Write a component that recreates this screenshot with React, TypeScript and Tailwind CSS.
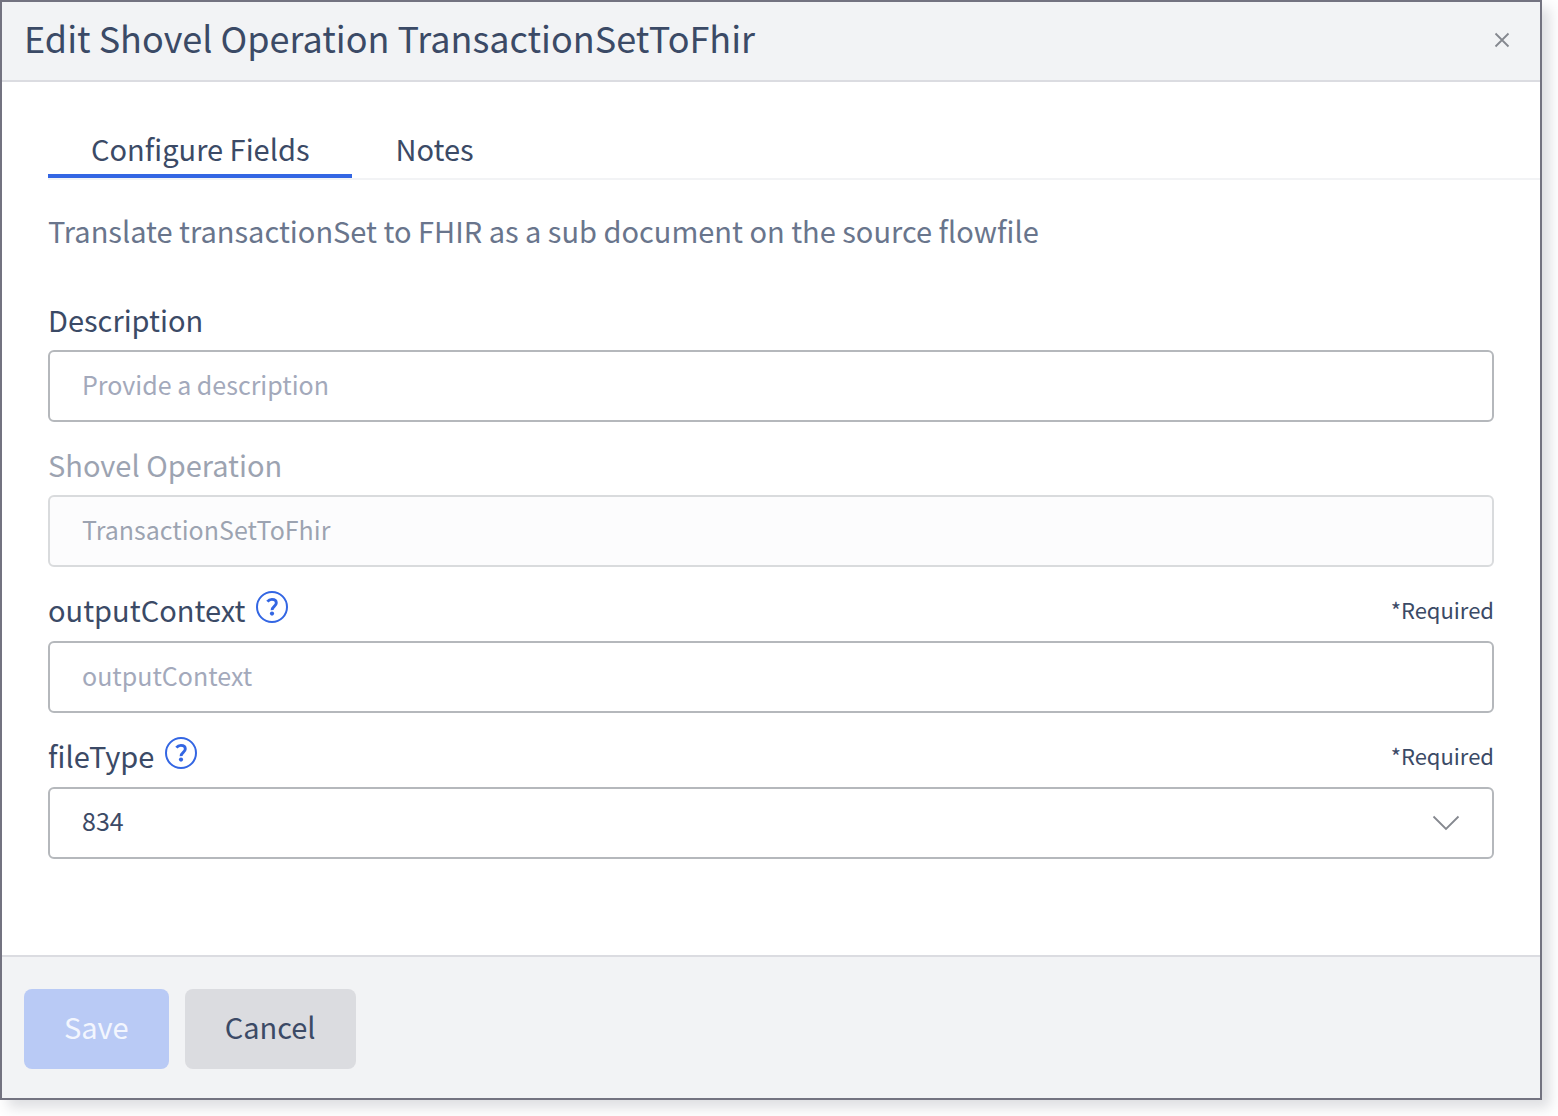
import { useState, type ReactNode } from "react";

function HelpIcon() {
  return (
    <svg viewBox="0 0 32 32" className="h-8 w-8" fill="none" stroke="currentColor" aria-hidden="true">
      <circle cx="16" cy="16" r="15" strokeWidth="2" />
      <path d="M11.4 10.6C12.6 9.1 14 8.4 15.9 8.4c2.7 0 4.4 1.4 4.4 3.6 0 3.2-4.5 3.6-4.2 7.2" strokeWidth="2.9" />
      <circle cx="16" cy="22.6" r="2.1" fill="currentColor" stroke="none" />
    </svg>
  );
}

function Field({
  id,
  label,
  help,
  disabled,
  children,
}: {
  id: string;
  label: string;
  help?: boolean;
  disabled?: boolean;
  children: ReactNode;
}) {
  return (
    <div className={disabled ? "opacity-50" : ""}>
      <div className="flex items-start justify-between pb-2">
        <div className="flex min-h-[41px] items-start gap-[11px]">
          <label htmlFor={id} className="text-[29px] leading-9">
            {label}
          </label>
          {help && (
            <button type="button" aria-label={`About ${label}`} className="mb-[10px] text-[#3366e3]">
              <HelpIcon />
            </button>
          )}
        </div>
        {help && <span className="text-[22px] leading-9">*Required</span>}
      </div>
      {children}
    </div>
  );
}

const control =
  "block h-[72px] w-full rounded-md border-2 border-[#b5b8bc] bg-white px-8 pb-1 text-[25px] placeholder:text-[#a3a9bb] placeholder:opacity-100";

export default function App() {
  const [tab, setTab] = useState("Configure Fields");

  return (
    <div className="flex min-h-screen bg-white pr-4 pb-4 font-['Noto_Sans_CJK_SC',sans-serif] text-[#3b4a66]">
      <div
        role="dialog"
        aria-labelledby="title"
        className="flex flex-1 flex-col border-2 border-[#737380] bg-white shadow-[8px_8px_12px_rgba(60,65,85,0.17)]"
      >
        <header className="flex h-20 items-center justify-between border-b-2 border-[#dbdce1] bg-[#f2f3f5] pr-[30px] pb-0.5 pl-[22px]">
          <h1 id="title" className="pb-1.5 text-[36px] leading-[48px]">
            Edit Shovel Operation TransactionSetToFhir
          </h1>
          <button type="button" aria-label="Close" className="text-[#85888f]">
            <svg viewBox="0 0 16 16" className="h-4 w-4" stroke="currentColor" strokeWidth="1.8">
              <path d="M1.5 1.5l13 13M14.5 1.5l-13 13" />
            </svg>
          </button>
        </header>

        <main className="flex-1 pt-12 pb-24 pl-[46px]">
          <div role="tablist" className="flex border-b-2 border-[#f2f3f5]">
            {["Configure Fields", "Notes"].map((name) => (
              <button
                key={name}
                type="button"
                role="tab"
                aria-selected={tab === name}
                onClick={() => setTab(name)}
                className={`border-b-4 px-[43px] pb-2 text-[29px] leading-9 ${
                  tab === name ? "border-[#3366e3]" : "border-transparent"
                }`}
              >
                {name}
              </button>
            ))}
          </div>

          <div className="pr-[46px]">
            <p className="mt-8 mb-[53px] text-[29px] leading-9 text-[#69758c]">
              Translate transactionSet to FHIR as a sub document on the source flowfile
            </p>

            <form className="flex flex-col gap-6">
              <Field id="description" label="Description">
                <input id="description" type="text" placeholder="Provide a description" className={control} />
              </Field>
              <Field id="operation" label="Shovel Operation" disabled>
                <input
                  id="operation"
                  type="text"
                  defaultValue="TransactionSetToFhir"
                  disabled
                  className="block h-[72px] w-full rounded-md border-2 border-[#b5b8bc] bg-[#fbfbfc] px-8 pb-1 text-[25px]"
                />
              </Field>
              <Field id="outputContext" label="outputContext" help>
                <input id="outputContext" type="text" placeholder="outputContext" className={control} />
              </Field>
              <Field id="fileType" label="fileType" help>
                <div className="relative">
                  <select id="fileType" className={`${control} appearance-none`}>
                    <option>834</option>
                  </select>
                  <svg
                    viewBox="0 0 28 16"
                    className="pointer-events-none absolute top-7 right-[34px] h-4 w-7"
                    fill="none"
                    stroke="#85888f"
                    strokeWidth="1.8"
                  >
                    <path d="M1.5 1.5L14 14L26.5 1.5" />
                  </svg>
                </div>
              </Field>
            </form>
          </div>
        </main>

        <footer className="flex gap-4 border-t-2 border-[#dbdce1] bg-[#f2f3f5] px-[22px] pt-8 pb-[29px]">
          <button
            type="button"
            disabled
            className="h-20 rounded-lg bg-[#b9caf5] px-10 pb-1 text-[29px] text-[#f3f6fe]"
          >
            Save
          </button>
          <button type="button" className="h-20 rounded-lg bg-[#dbdce0] px-10 pb-1 text-[29px]">
            Cancel
          </button>
        </footer>
      </div>
    </div>
  );
}
